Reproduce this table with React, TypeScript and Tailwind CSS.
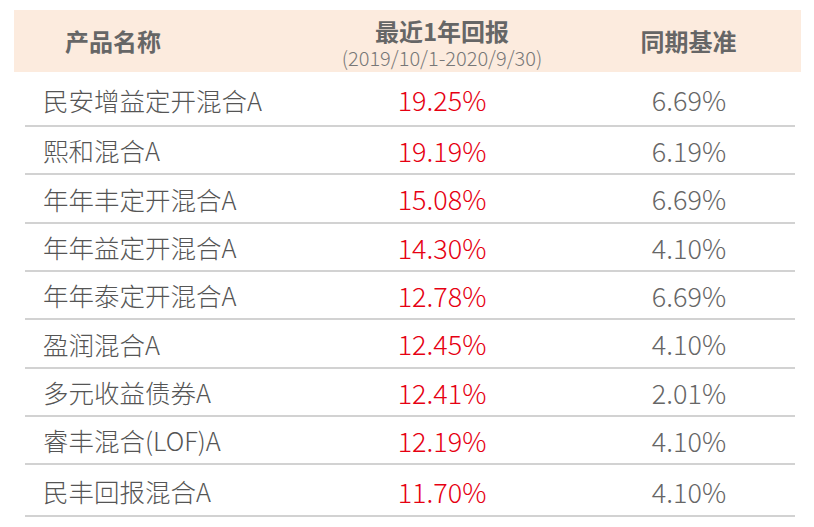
const rows = [
  { name: '民安增益定开混合A', ret: '19.25%', base: '6.69%' },
  { name: '熙和混合A', ret: '19.19%', base: '6.19%' },
  { name: '年年丰定开混合A', ret: '15.08%', base: '6.69%' },
  { name: '年年益定开混合A', ret: '14.30%', base: '4.10%' },
  { name: '年年泰定开混合A', ret: '12.78%', base: '6.69%' },
  { name: '盈润混合A', ret: '12.45%', base: '4.10%' },
  { name: '多元收益债券A', ret: '12.41%', base: '2.01%' },
  { name: '睿丰混合(LOF)A', ret: '12.19%', base: '4.10%' },
  { name: '民丰回报混合A', ret: '11.70%', base: '4.10%' },
];

const heights = ['h-[55px] pt-[2px]', 'h-[48px]', 'h-[49px]', 'h-[48px]', 'h-[48px]', 'h-[49px]', 'h-[48px]', 'h-[48px]', 'h-[52px] pt-[2px]'];

export default function App() {
  return (
    <div className="w-[814px] h-[527px] bg-white font-['Noto_Sans_CJK_SC','Noto_Sans',sans-serif] overflow-hidden">
      <div className="ml-[14px] mt-[10px] w-[787px] h-[62px] bg-[#fcebde] grid grid-cols-[316px_224px_1fr] items-center">
        <div className="pl-[51px] text-[24px] font-bold text-[#666] leading-none">产品名称</div>
        <div className="flex flex-col items-center pt-[4px]">
          <div className="text-[24px] font-bold text-[#666] leading-[26px]">最近1年回报</div>
          <div className="mt-[3px] text-[20px] font-light text-[#777] leading-[21px]">(2019/10/1-2020/9/30)</div>
        </div>
        <div className="pl-[22px] text-center text-[24px] font-bold text-[#666] leading-none">同期基准</div>
      </div>
      <div className="ml-[25px] w-[770px]">
        {rows.map((r, i) => (
          <div
            key={r.name}
            className={`grid grid-cols-[305px_224px_1fr] items-center border-b-2 border-[#d2d2d2] ${heights[i]}`}
          >
            <div className="pl-[18px] text-[25.5px] font-light text-[#555] leading-none">{r.name}</div>
            <div className="text-center text-[27px] font-light text-[#e60012] leading-none">{r.ret}</div>
            <div className="pl-[29px] text-center text-[27px] font-light text-[#666] leading-none">{r.base}</div>
          </div>
        ))}
      </div>
    </div>
  );
}
